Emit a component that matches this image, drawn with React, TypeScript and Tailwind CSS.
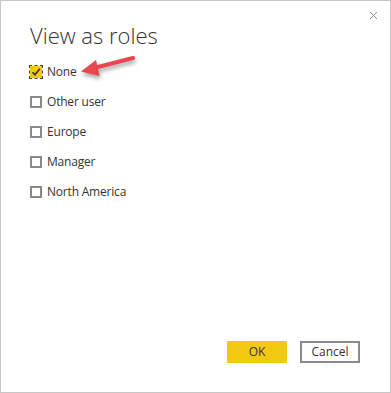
import { X } from 'lucide-react'

const roles = ['None', 'Other user', 'Europe', 'Manager', 'North America']

function Box({ checked }: { checked: boolean }) {
  if (checked) {
    return (
      <span className="relative flex h-[12px] w-[12px] items-center justify-center bg-[#f2c811] outline outline-1 outline-dashed outline-[#444] outline-offset-0">
        <svg width="10" height="10" viewBox="0 0 10 10">
          <path d="M1.5 5.2 L4 7.8 L8.8 1.8" fill="none" stroke="#333" strokeWidth="1.6" />
        </svg>
      </span>
    )
  }
  return <span className="block h-[12px] w-[12px] border-2 border-[#8a8a8a] bg-white" />
}

export default function App() {
  return (
    <div
      className="relative flex h-[393px] w-[391px] flex-col border border-[#c6c6c6] bg-white text-[#333]"
      style={{ fontFamily: '"Open Sans", "Noto Sans", sans-serif' }}
    >
      <button className="absolute right-[10px] top-[8px] text-[#666]">
        <X size={13} strokeWidth={1.3} />
      </button>

      <h1 className="ml-[29px] mt-[19px] text-[22px] font-light leading-[30px] text-[#333]">
        View as roles
      </h1>

      <div className="ml-[29px] mt-[7px] flex flex-col">
        {roles.map((role, i) => (
          <label key={role} className="flex h-[30px] items-center gap-[5px] text-[12px] tracking-[-0.2px]">
            <Box checked={i === 0} />
            <span>{role}</span>
          </label>
        ))}
      </div>

      <svg
        className="absolute left-[76px] top-[52px]"
        width="64"
        height="30"
        viewBox="0 0 64 30"
        style={{ filter: 'drop-shadow(1px 3px 2px rgba(0,0,0,0.35))' }}
      >
        <path d="M56 5 L17 15" stroke="#e8474f" strokeWidth="4" strokeLinecap="round" fill="none" />
        <path d="M4 18.5 L19 7 L22.5 23 Z" fill="#e8474f" />
      </svg>

      <div className="mt-auto mb-[29px] mr-[30px] flex justify-end gap-[13px]">
        <button className="h-[22px] w-[60px] bg-[#f2c811] text-[12px] text-[#333]">OK</button>
        <button className="h-[22px] w-[60px] border-2 border-[#8a8a8a] bg-white text-[12px] text-[#333]">
          Cancel
        </button>
      </div>
    </div>
  )
}
